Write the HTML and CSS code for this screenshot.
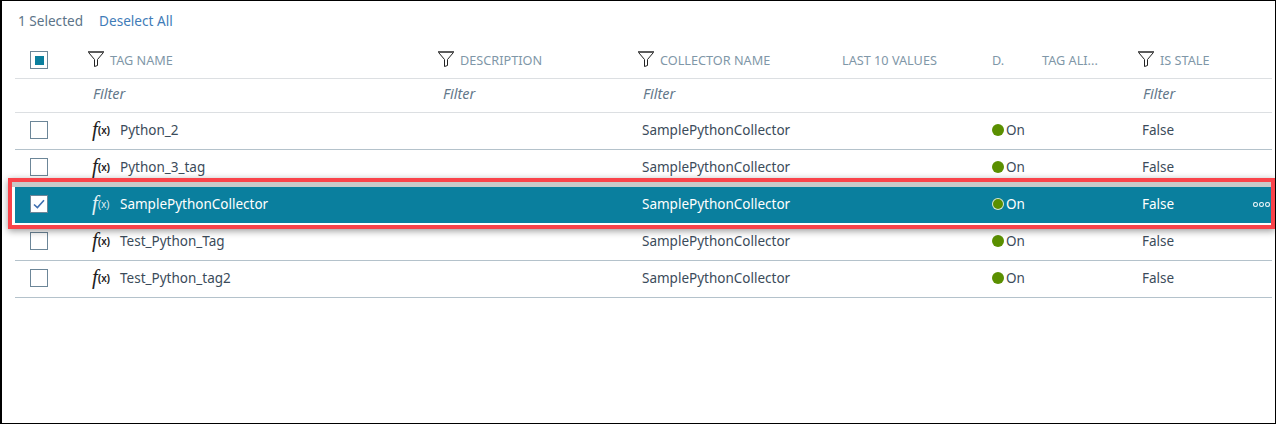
FILE: index.html
```html
<!DOCTYPE html>
<html lang="en">
<head>
<meta charset="utf-8">
<title>Tags</title>
<link rel="stylesheet" href="styles.css">
</head>
<body>
<svg class="defs" width="0" height="0" aria-hidden="true">
  <symbol id="funnel" viewBox="0 0 16 16">
    <path d="M0 1H16" stroke="#5c5c5c" stroke-width="2" fill="none"/>
    <path d="M1 2L6.5 8.5V15.5L9.5 14.5V8.5L15 2" stroke="#222" stroke-width="1" fill="#fff"/>
  </symbol>
  <symbol id="more" viewBox="0 0 17 5">
    <circle cx="2.5" cy="2.5" r="2" fill="none" stroke="#dfeef3" stroke-width="1.1"/>
    <circle cx="8.5" cy="2.5" r="2" fill="none" stroke="#dfeef3" stroke-width="1.1"/>
    <circle cx="14.5" cy="2.5" r="2" fill="none" stroke="#dfeef3" stroke-width="1.1"/>
  </symbol>
</svg>
<main class="frame">
  <div class="toolbar">
    <span class="count">1 Selected</span>
    <a class="deselect" href="#">Deselect All</a>
  </div>

  <div class="row head">
    <div class="cell check"><span class="box partial"></span></div>
    <div class="cell th"><svg class="funnel"><use href="#funnel"/></svg>TAG NAME</div>
    <div class="cell th"><svg class="funnel"><use href="#funnel"/></svg>DESCRIPTION</div>
    <div class="cell th"><svg class="funnel"><use href="#funnel"/></svg>COLLECTOR NAME</div>
    <div class="cell th plain">LAST 10 VALUES</div>
    <div class="cell th plain">D.</div>
    <div class="cell th plain">TAG ALI...</div>
    <div class="cell th"><svg class="funnel"><use href="#funnel"/></svg>IS STALE</div>
  </div>

  <div class="row filters">
    <div class="cell"></div>
    <div class="cell filter">Filter</div>
    <div class="cell filter">Filter</div>
    <div class="cell filter">Filter</div>
    <div class="cell"></div>
    <div class="cell"></div>
    <div class="cell"></div>
    <div class="cell filter">Filter</div>
  </div>

  <div class="row data">
    <div class="cell check"><span class="box"></span></div>
    <div class="cell name"><span class="fx"><i>f</i><b>(x)</b></span>Python_2</div>
    <div class="cell"></div>
    <div class="cell text">SamplePythonCollector</div>
    <div class="cell"></div>
    <div class="cell status"><span class="dot"></span>On</div>
    <div class="cell"></div>
    <div class="cell text">False</div>
  </div>

  <div class="row data">
    <div class="cell check"><span class="box"></span></div>
    <div class="cell name"><span class="fx"><i>f</i><b>(x)</b></span>Python_3_tag</div>
    <div class="cell"></div>
    <div class="cell text">SamplePythonCollector</div>
    <div class="cell"></div>
    <div class="cell status"><span class="dot"></span>On</div>
    <div class="cell"></div>
    <div class="cell text">False</div>
  </div>

  <div class="row data selected">
    <div class="cell check"><span class="box checked"><svg class="tick" viewBox="0 0 12 10"><path d="M1 5.5L4.4 8.6L11 1.2" fill="none" stroke="#3f6fb0" stroke-width="1.6"/></svg></span></div>
    <div class="cell name"><span class="fx"><i>f</i><b>(x)</b></span>SamplePythonCollector</div>
    <div class="cell"></div>
    <div class="cell text">SamplePythonCollector</div>
    <div class="cell"></div>
    <div class="cell status"><span class="dot"></span>On</div>
    <div class="cell"></div>
    <div class="cell text">False</div>
    <div class="cell actions"><svg class="more"><use href="#more"/></svg></div>
  </div>

  <div class="row data">
    <div class="cell check"><span class="box"></span></div>
    <div class="cell name"><span class="fx"><i>f</i><b>(x)</b></span>Test_Python_Tag</div>
    <div class="cell"></div>
    <div class="cell text">SamplePythonCollector</div>
    <div class="cell"></div>
    <div class="cell status"><span class="dot"></span>On</div>
    <div class="cell"></div>
    <div class="cell text">False</div>
  </div>

  <div class="row data">
    <div class="cell check"><span class="box"></span></div>
    <div class="cell name"><span class="fx"><i>f</i><b>(x)</b></span>Test_Python_tag2</div>
    <div class="cell"></div>
    <div class="cell text">SamplePythonCollector</div>
    <div class="cell"></div>
    <div class="cell status"><span class="dot"></span>On</div>
    <div class="cell"></div>
    <div class="cell text">False</div>
  </div>

  <div class="highlight"></div>
</main>
</body>
</html>
```

FILE: styles.css
```css
* { box-sizing: border-box; }

html, body {
  margin: 0;
  background: #fff;
}

.defs { position: absolute; }

.frame {
  position: relative;
  width: 1276px;
  height: 424px;
  padding: 0 3px 0 13px;
  border: 1px solid #000;
  border-left-width: 2px;
  font-family: "Noto Sans", sans-serif;
  font-size: 13.5px;
  color: #3b4b5a;
  overflow: hidden;
}

.toolbar {
  height: 41px;
  padding: 0 0 2px 3px;
  display: flex;
  align-items: center;
  gap: 16px;
  font-size: 13.6px;
}

.count { color: #5c7488; }

.deselect {
  color: #3f7cb8;
  text-decoration: none;
}

.row {
  display: grid;
  grid-template-columns: 70px 350px 200px 200px 150px 50px 100px 110px 27px;
  align-items: center;
}

.head {
  height: 37px;
  border-bottom: 1px solid #dcdfe2;
}

.filters {
  height: 34px;
  padding-bottom: 5px;
  border-bottom: 1px solid #dcdfe2;
}

.data {
  height: 37px;
  padding-bottom: 2px;
  border-bottom: 1px solid #b4c2cb;
}

.cell {
  min-width: 0;
  display: flex;
  align-items: center;
  white-space: nowrap;
}

.check { padding-left: 15px; }

.box {
  width: 18px;
  height: 18px;
  display: flex;
  align-items: center;
  justify-content: center;
  background: #fff;
  border: 1.5px solid #6c8698;
}

.box.partial::before {
  content: "";
  width: 9px;
  height: 9px;
  background: #0a7f9e;
}

.tick {
  width: 12px;
  height: 10px;
}

.th {
  padding-left: 3px;
  font-size: 12.7px;
  color: #7f97a8;
}

.th.plain { padding-left: 7px; }

.funnel {
  width: 16px;
  height: 16px;
  margin-right: 6px;
  position: relative;
  top: -1px;
}

.filter {
  padding-left: 8px;
  font-style: italic;
  font-size: 14.5px;
  color: #64788a;
}

.name { padding-left: 7px; }

.fx {
  width: 28px;
  height: 20px;
  color: #1f1f1f;
  display: inline-flex;
  align-items: center;
}

.fx i {
  font-family: "Liberation Serif", serif;
  font-size: 21px;
  line-height: 1;
  position: relative;
  top: -1px;
}

.fx b {
  font-family: "Liberation Sans", sans-serif;
  font-size: 10px;
  margin-left: 0;
}

.text { padding-left: 7px; }

.status { padding-left: 7px; }

.dot {
  width: 12px;
  height: 12px;
  margin-right: 2px;
  border-radius: 50%;
  background: #5a8f00;
}

.actions { justify-content: flex-start; padding-left: 8px; }

.more {
  width: 17px;
  height: 5px;
}

.selected {
  background: #0a7f9e;
  color: #fff;
  border-bottom: 1px solid #fff;
}

.selected .fx { color: #e4f1f5; }
.selected .fx b { font-weight: 400; }

.selected .dot { box-shadow: 0 0 0 1px #cfe3e8 inset; }

.highlight {
  position: absolute;
  left: 6px;
  top: 177px;
  width: 1267px;
  height: 51px;
  border: 4px solid #f9434a;
  box-shadow: 0 2px 7px rgba(0, 0, 0, .4);
  pointer-events: none;
}

.highlight::before {
  content: "";
  display: block;
  height: 5px;
  background: #c9c9c9;
}
```
